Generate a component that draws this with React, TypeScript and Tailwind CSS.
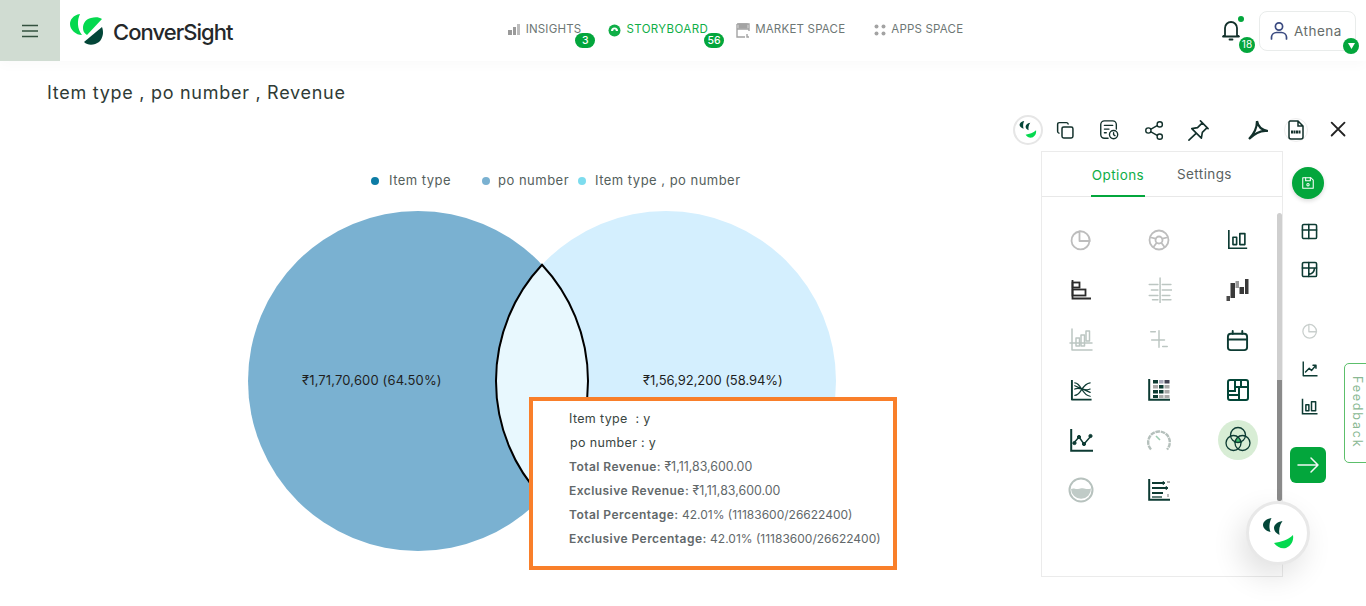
import React from "react";

const S = ({ c = "#0d3b33", w = 1.8, size = 24, children, vb = 24 }: { c?: string; w?: number; size?: number; children: React.ReactNode; vb?: number }) => (
  <svg width={size} height={size} viewBox={`0 0 ${vb} ${vb}`} fill="none" stroke={c} strokeWidth={w} strokeLinecap="round" strokeLinejoin="round">{children}</svg>
);

const Logo = () => (
  <svg width="34" height="32" viewBox="0 0 34 32">
    <path d="M10 0C3 1 0 6 0 10C0 16 6 21 12 21C7 15 7 6 10 0Z" fill="#04d94f" />
    <path d="M13 14C13 9 16 5 21 4C25 3 29 3 32 5L17 21C14 19 13 17 13 14Z" fill="#04d94f" />
    <path d="M14 28L32 13C34 18 33 24 29 28C25 31 18 32 14 28Z" fill="#034638" />
  </svg>
);

const Bot = ({ s = 1 }: { s?: number }) => (
  <svg width={32 * s} height={31 * s} viewBox="0 0 32 31">
    <path d="M9.500 0C4 1 1 4 1 7C1 10 4 13 8.500 14C7 10 7 5 9.500 0Z" fill="#034638" />
    <path d="M20.500 3C15 4 12 7 12 10C12 13 14 15 17.500 17C16.500 12 17.500 7 20.500 3Z" fill="#034638" />
    <path d="M12 25C19 24 26 22 31 17C32 23 29 28 24 30C19 31 15 29 12 25Z" fill="#04d94f" />
  </svg>
);

const Tile = ({ children }: { children: React.ReactNode }) => (
  <div className="flex h-[50px] items-center justify-center">{children}</div>
);

const D = "#0d3b33";
const G = "#bcc6c2";
const Bars = ({ size = 22, c = D, w = 1.8 }: { size?: number; c?: string; w?: number }) => (
  <S c={c} size={size} w={w}><path d="M2 1v20h20" strokeLinecap="butt" strokeLinejoin="miter" /><rect x="6.5" y="9" width="4" height="8" /><rect x="14" y="5" width="5.5" height="12" /></S>
);
const chartIcons: React.ReactNode[] = [
  <S c="#bdbdbd" size={24}><path d="M10.5 3.5A9 9 0 1 0 20.5 13H10.5z" /><path d="M10.5 3.3A9.5 9.5 0 0 1 20.7 13" /></S>,
  <S c="#bdbdbd" size={24}><circle cx="12" cy="12" r="9.5" /><circle cx="12" cy="12" r="3.5" /><path d="M4 9.5l4.7 1.2M20 9.5l-4.7 1.2M9.5 15l-3 4M14.5 15l3 4" /></S>,
  <Bars />,
  <svg width="20" height="20" viewBox="0 0 20 20" fill="none" stroke="#2b2b2b" strokeWidth="1.8"><path d="M1.5 0v18.5H20" /><rect x="1.5" y="2.5" width="7" height="5" /><rect x="1.5" y="9.5" width="13" height="6" /></svg>,
  <S c={G} size={26} w={1.4}><path d="M13 1v24M1 25h24M3 7h8M15 7h8M5 12h6M15 12h10M3 17h8M15 17h7M6 21h5M15 21h8" /></S>,
  <svg width="23" height="23" viewBox="0 0 23 23"><rect x="0.5" y="17" width="3.5" height="5" fill="#4a4a4a" /><rect x="4.5" y="4" width="4.5" height="15" fill="#3a3a3a" /><rect x="9.5" y="2" width="3.5" height="7" fill="#999" /><rect x="13.5" y="8" width="4.5" height="7" fill="#3a3a3a" /><rect x="19" y="0" width="3.5" height="15" fill="#3a3a3a" /></svg>,
  <S c={G} size={24} w={1.5}><path d="M3 1v21h20M1 15h22" /><rect x="7" y="10" width="3.5" height="8" /><rect x="12" y="7" width="3.5" height="11" /><rect x="17" y="3" width="3.5" height="10" /></S>,
  <S c={G} size={22} w={1.6}><path d="M3 3h5M12 2v18M4 12h14M16 19h5" /></S>,
  <S size={23} w={2}><rect x="2" y="5" width="20" height="17" rx="3" /><path d="M2 11h20M7 2v3M17 2v3" /></S>,
  <S size={23} w={1.6}><path d="M2 1v20.5h20.5" strokeWidth={2} strokeLinecap="butt" /><path d="M5 4c7 0 7 13 16 14M5 17c7 0 7-12 16-13M5 10.5c5-3 11 3 16 0M5 7l16 7" strokeWidth={1.3} /></S>,
  <svg width="22" height="22" viewBox="0 0 22 22" fill={D}><path d="M1.2 0v20.8H22" fill="none" stroke={D} strokeWidth="2" /><rect x="5" y="1" width="5" height="3.5" /><rect x="11" y="1" width="4.5" height="3.5" fill="#aab" /><rect x="16.5" y="1" width="5" height="3.5" fill="#445" /><rect x="5" y="6" width="5" height="3.5" fill="#aaa" /><rect x="11" y="6" width="4.5" height="3.5" /><rect x="16.5" y="6" width="5" height="3.5" fill="#aaa" /><rect x="5" y="11" width="5" height="3.5" /><rect x="11" y="11" width="4.5" height="3.5" /><rect x="16.5" y="11" width="5" height="3.5" fill="#aaa" /><rect x="5" y="16" width="5" height="3" /><rect x="11" y="16" width="4.5" height="3" fill="#aaa" /><rect x="16.5" y="16" width="5" height="3" fill="#aaa" /></svg>,
  <svg width="22" height="22" viewBox="0 0 22 22" fill="none" stroke="#034638" strokeWidth="2"><rect x="1" y="1" width="20" height="20" rx="2" /><path d="M8 1v11H1M8 8h13M14 1v7M12 8v13M1 16h11" /></svg>,
  <svg width="23" height="23" viewBox="0 0 23 23" fill={D} stroke={D}><path d="M1.2 0v21.8H23" fill="none" strokeWidth="2" /><path d="M3 15l6-7 5 7 7-8" fill="none" strokeWidth="1.4" /><circle cx="4.5" cy="14" r="1.6" /><circle cx="9" cy="8" r="1.6" /><circle cx="14" cy="15" r="1.6" /><circle cx="20.5" cy="7" r="1.6" /></svg>,
  <svg width="24" height="22" viewBox="0 0 24 22" fill="none" stroke="#b5c0bc" strokeWidth="2.4"><path d="M4 20.5A10.8 10.8 0 1 1 20 20.5" strokeDasharray="4.5 .8" /><path d="M9 7l4 4" stroke="#9dccb1" strokeWidth="1.6" /></svg>,
  <svg width="40" height="40" viewBox="0 0 40 40"><circle cx="20" cy="20" r="20" fill="#d8edd5" /><path d="M20 17.5l4.5 5.5h-9z" fill="#3bc16b" /><g fill="none" stroke={D} strokeWidth="1.3"><circle cx="20" cy="15" r="7.5" /><circle cx="15.5" cy="23" r="7.5" /><circle cx="24.5" cy="23" r="7.5" /></g></svg>,
  <svg width="26" height="26" viewBox="0 0 26 26"><circle cx="13" cy="13" r="11.5" fill="#fff" stroke="#b7c2be" strokeWidth="2" /><path d="M3 12c3-1.5 4 .5 7 0s3-1 6-.5 4 1 7 0a10 10 0 0 1-20 .5z" fill="#c0cbc7" /></svg>,
  <svg width="22" height="22" viewBox="0 0 22 22" fill="none" stroke={D}><path d="M1.2 0v20.8H22" strokeWidth="2" /><path d="M4 4h11M4 9h14M4 14h11" strokeWidth="2" /><path d="M15 2.5l2 1.5-2 1.500zM18 7.500l2 1.500-2 1.500z" fill={D} strokeWidth="1" /><path d="M4 18h10" strokeWidth="1.300" /><path d="M19 3h3M20 15v3" stroke="#999" strokeWidth="1.300" /></svg>,
];

const NavItem = ({ icon, label, active, badge, cls = "", badgeCls = "right-[-16px]" }: { icon: React.ReactNode; label: string; active?: boolean; badge?: string; cls?: string; badgeCls?: string }) => (
  <div className={`relative flex items-center gap-[5px] text-[11.5px] ${active ? "tracking-[0.4px] text-[#0fae47]" : "tracking-[0.2px] text-[#6d7775]"} ${cls}`}>
    {icon}
    <span>{label}</span>
    {badge && <span className={`absolute top-[12px] flex h-[15px] w-[20px] items-center justify-center rounded-full bg-[#03a63c] text-[10.5px] font-medium tracking-normal text-white ${badgeCls}`}>{badge}</span>}
  </div>
);

const Tool = ({ children, cls = "" }: { children: React.ReactNode; cls?: string }) => (
  <div className={`flex h-[30px] w-[30px] items-center justify-center ${cls}`}>{children}</div>
);

export default function App() {
  return (
    <div className="relative h-[606px] w-[1366px] overflow-hidden bg-white font-['Inter','Liberation_Sans',sans-serif] text-[#333]">
      {/* Header */}
      <header className="flex h-[61px] items-center shadow-[0_4px_12px_rgba(0,0,0,0.025)]">
        <div className="flex h-full w-[60px] items-center justify-center bg-[#d0dcd2]">
          <svg width="18" height="14" viewBox="0 0 18 14" stroke="#33513f" strokeWidth="1.4"><path d="M1 1.5h16M1 7h16M1 12.5h16" /></svg>
        </div>
        <div className="ml-[10px] flex items-center gap-[9px] pb-[1px]">
          <Logo />
          <span className="mt-[4px] text-[22px] font-medium tracking-[-0.95px] text-[#25282a]">ConverSight</span>
        </div>
        <nav className="ml-[275px] flex items-center pb-[1px]">
          <NavItem label="INSIGHTS" badge="3" badgeCls="right-[-14px]" icon={<svg width="13" height="12" viewBox="0 0 13 12" fill="#9a9a9a"><rect x="0" y="6" width="4" height="5" /><rect x="5" y="3" width="3" height="8" /><rect x="9" y="0" width="3" height="11" fill="#bdbdbd" /></svg>} />
          <NavItem cls="ml-[27px]" active label="STORYBOARD" badge="56" icon={<svg width="13" height="13" viewBox="0 0 13 13"><circle cx="6.5" cy="6.500" r="6" fill="#0fae47" /><path d="M3 7a3.500 3.500 0 0 1 7 0z" fill="#fff" /><circle cx="6.500" cy="6.500" r="1.200" fill="#0fae47" /></svg>} />
          <NavItem cls="ml-[28px]" label="MARKET SPACE" icon={<svg width="14" height="15" viewBox="0 0 14 15" fill="none" stroke="#a3a3a3" strokeWidth="1.4"><path d="M1 1h12v7M1 1v13h8M1 6h12" /><rect x="3" y="1" width="8" height="4" fill="#a3a3a3" /><path d="M11 11v3h2" /></svg>} />
          <NavItem cls="ml-[29px]" label="APPS SPACE" icon={<svg width="12" height="12" viewBox="0 0 12 12" fill="#a3a3a3"><circle cx="2.500" cy="2.500" r="2" /><circle cx="9.500" cy="2.500" r="2" /><circle cx="2.500" cy="9.500" r="2" /><circle cx="9.500" cy="9.500" r="2" /></svg>} />
        </nav>
        <div className="relative ml-auto mr-[10px] flex items-center gap-[16px]">
          <div className="relative mb-[2px]">
            <S c="#12302b" size={24} w={1.8}><path d="M6 17V10a6 6 0 0 1 12 0v7l2 1.500H4z" /><path d="M10.500 21.500h3" /></S>
            <span className="absolute right-[-1px] top-[-2px] h-[6px] w-[6px] rounded-full bg-[#03a63c]" />
            <span className="absolute right-[-12px] top-[19px] flex h-[16px] w-[16px] items-center justify-center rounded-full bg-[#03a63c] text-[10px] text-white">18</span>
          </div>
          <div className="relative flex h-[40px] w-[97px] items-center gap-[5px] rounded-[8px] border border-[#e9eceb] pl-[9px] pt-[1px] text-[13.5px] tracking-[0.5px] text-[#666c6a]">
            <svg width="20" height="22" viewBox="0 0 20 22" fill="none" stroke="#3a4a80" strokeWidth="1.7"><circle cx="10" cy="6.500" r="3.600" /><path d="M2.500 19v-2a5 5 0 0 1 5-4.500h5a5 5 0 0 1 5 4.500v2" strokeLinecap="round" /></svg>
            <span>Athena</span>
            <span className="absolute bottom-[-4px] right-[-4px] flex h-[16px] w-[16px] items-center justify-center rounded-full bg-[#03a63c]">
              <svg width="7" height="6" viewBox="0 0 7 6" fill="#fff"><path d="M0 0h7L3.500 6z" /></svg>
            </span>
          </div>
        </div>
      </header>

      {/* Title */}
      <div className="pl-[47px] pt-[20px] text-[18px] leading-[24px] tracking-[0.72px] text-[#2f3b36]">Item type , po number , Revenue</div>

      {/* Toolbar */}
      <div className="mt-[10px] flex h-[30px] items-center pl-[1013px]">
        <Tool cls="rounded-full border-2 border-[#e6e6e6]"><Bot s={0.55} /></Tool>
        <Tool cls="ml-[7px]"><S c="#12302b" size={21} w={1.7}><rect x="8" y="8" width="12.500" height="12.500" rx="2" /><path d="M15 4.500A2 2 0 0 0 13 3H5a2 2 0 0 0-2 2v8a2 2 0 0 0 1.500 2" /></S></Tool>
        <Tool cls="ml-[14px]"><S c="#12302b" size={22} w={1.5}><path d="M11 21H7a4 4 0 0 1-4-4V6a4 4 0 0 1 4-4h9a4 4 0 0 1 4 4v5" /><path d="M7 7h9M7 11h5M7 15h2" /><circle cx="17" cy="17" r="4.500" /><path d="M17 15v2.200l1.500 1" /></S></Tool>
        <Tool cls="ml-[15px]"><S c="#12302b" size={21} w={1.6}><circle cx="18" cy="5" r="3" /><circle cx="5" cy="12" r="3" /><circle cx="18" cy="19" r="3" /><path d="M8 10.500l7-4M8 13.500l7 4" /></S></Tool>
        <Tool cls="ml-[14px]"><S c="#12302b" size={23} w={1.7}><path d="M14 2l8 8M16 4l-5 5-6 1 10 10 1-6 5-5M9.500 15L2 22" /></S></Tool>
        <Tool cls="ml-[30px]"><svg width="20" height="20" viewBox="0 0 20 20" fill="none" stroke="#12302b" strokeWidth="2.200"><path d="M9 1c0 6-3 13-8 18M9 1c1 6 4 9 11 10-6-1-13 2-19 8" /></svg></Tool>
        <Tool cls="ml-[8px]"><span className="flex h-[24px] w-[24px] items-center justify-center rounded-full border border-[#eee]"><svg width="18" height="20" viewBox="0 0 18 20" fill="none" stroke="#12302b" strokeWidth="1.500"><path d="M3 1h8l5 5v11a2 2 0 0 1-2 2H4a2 2 0 0 1-2-2V2zM11 1v5h5" /><path d="M4 12h10" strokeWidth="3" strokeDasharray="2 .5" /></svg></span></Tool>
        <Tool cls="ml-[13px]"><S c="#222" size={22} w={2}><path d="M4 4l14 14M18 4L4 18" /></S></Tool>
      </div>

      {/* Main */}
      <div className="mt-[6px] flex">
        <div className="w-[1041px]">
          <div className="flex h-[57px] items-center pl-[371px] pt-[2px] text-[13px] tracking-[0.48px] text-[#54605c]">
            <span className="h-[8px] w-[8px] rounded-full bg-[#0d7ca5]" />
            <span className="ml-[10px]">Item type</span>
            <span className="ml-[31px] h-[8px] w-[8px] rounded-full bg-[#7ab1d1]" />
            <span className="ml-[8px]">po number</span>
            <span className="ml-[9px] h-[8px] w-[8px] rounded-full bg-[#7ddcee]" />
            <span className="ml-[9px]">Item type , po number</span>
          </div>
          <div className="relative">
            <svg width="1041" height="345" viewBox="0 0 1041 345" className="block">
              <circle cx="418" cy="173" r="170" fill="#7ab1d1" />
              <circle cx="666" cy="173" r="170" fill="#d4effe" />
              <path d="M542 56.700 A170 170 0 0 1 542 289.300 A170 170 0 0 1 542 56.700Z" fill="#e8f8fe" stroke="#000" strokeWidth="2" />
            </svg>
            <span className="absolute left-[302px] top-[163px] text-[13px] tracking-[0.15px] text-[#1f1f1f]">₹1,71,70,600 (64.50%)</span>
            <span className="absolute left-[643px] top-[163px] text-[13px] tracking-[-0.05px] text-[#1f1f1f]">₹1,56,92,200 (58.94%)</span>
          </div>
        </div>

        {/* Options panel */}
        <div className="h-[426px] w-[242px] border border-[#ebebeb]">
          <div className="flex h-[45px] items-end border-b border-[#e8e8e8] pl-[49px] text-[13.5px] tracking-[0.4px]">
            <div className="-mb-px h-[45px] w-[54px] border-b-2 border-[#03a63c] pt-[13px] text-center text-[#0fae47]">Options</div>
            <div className="ml-[32px] h-[45px] pt-[13px] text-[#5a625f]">Settings</div>
          </div>
          <div className="relative">
            <div className="grid w-[235px] grid-cols-3 pt-[18px]">
              {chartIcons.map((ic, i) => <Tile key={i}>{ic}</Tile>)}
            </div>
            <div className="absolute right-[0px] top-[16px] h-[288px] w-[5px] rounded-full bg-[#cfcfcf]"><div className="mt-[167px] h-[121px] w-full rounded-b-full bg-[#8a8a8a]" /></div>
          </div>
        </div>

        {/* Right rail */}
        <div className="flex w-[83px] flex-col items-start pl-[9px]">
          <div className="mt-[16px] flex h-[32px] w-[32px] items-center justify-center rounded-full bg-[#03a63c] shadow-[0_2px_4px_rgba(0,0,0,0.15)]">
            <S c="#fff" size={14} w={1.8}><path d="M4 3h13l4 4v14H3V3z" /><path d="M8 3v5h8V3" /><circle cx="12" cy="15" r="2" /></S>
          </div>
          <div className="ml-[9px] mt-[24px] flex flex-col">
            <S size={17} w={2.200}><rect x="2" y="2" width="20" height="20" rx="2" /><path d="M2 10h20M11 2v20" /></S>
            <div className="mt-[21px]"><S size={17} w={2.200}><rect x="2" y="2" width="20" height="20" rx="2" /><path d="M2 10h20M11 2v20M19 10c0 6-3 8-8 9" /></S></div>
            <div className="mt-[44px]"><S c="#c9cfcd" size={18} w={1.700}><path d="M10.500 3.500A9 9 0 1 0 20.500 13H10.500z" /><path d="M10.500 3.300A9.500 9.500 0 0 1 20.700 13" /></S></div>
            <div className="mt-[20px]"><S size={18} w={1.900}><path d="M3 2v19h19" strokeLinecap="butt" /><path d="M6 16l5-5 3 3 6-7M16 7h4v4" /></S></div>
            <div className="mt-[20px]"><Bars size={18} w={2} /></div>
          </div>
          <div className="-ml-[2px] mt-[31px] flex h-[36px] w-[36px] items-center justify-center rounded-[6px] bg-[#03a63c]">
            <S c="#f2f8f4" size={24} w={1.500}><path d="M2 12h20M15 5l7 7-7 7" /></S>
          </div>
        </div>
      </div>

      {/* Feedback tab */}
      <div className="absolute left-[1344px] top-[363px] flex h-[100px] w-[30px] items-start rounded-l-[5px] border border-[#5cbf6b] bg-white">
        <span className="ml-[2px] mt-[12px] text-[12.5px] tracking-[1.8px] text-[#8ab893] [writing-mode:vertical-rl]">Feedback</span>
      </div>

      {/* Tooltip */}
      <div className="absolute left-[529px] top-[397px] h-[173px] w-[368px] border-4 border-[#f97f2a] bg-white pl-[36px] pt-[6px] text-[12px] leading-[24px] text-[#62686a]">
        <div className="text-[12.5px] tracking-[0.35px] text-[#3a4642]">Item type &nbsp;: y</div>
        <div className="pl-[1px] text-[12.5px] tracking-[0.35px] text-[#3a4642]">po number : y</div>
        <div><b className="font-semibold tracking-[0.45px]">Total Revenue:</b> <span className="text-[12.4px]">₹1,11,83,600.00</span></div>
        <div><b className="font-semibold tracking-[0.45px]">Exclusive Revenue:</b> <span className="text-[12.4px]">₹1,11,83,600.00</span></div>
        <div><b className="font-semibold tracking-[0.45px]">Total Percentage:</b> 42.01% (11183600/26622400)</div>
        <div><b className="font-semibold tracking-[0.45px]">Exclusive Percentage:</b> 42.01% (11183600/26622400)</div>
      </div>

      {/* Floating assistant */}
      <div className="absolute left-[1246px] top-[501px] flex h-[64px] w-[64px] items-center justify-center rounded-full border-[3px] border-[#e8e8e8] bg-white shadow-[-6px_12px_30px_rgba(0,0,0,0.12)]">
        <Bot />
      </div>
    </div>
  );
}
